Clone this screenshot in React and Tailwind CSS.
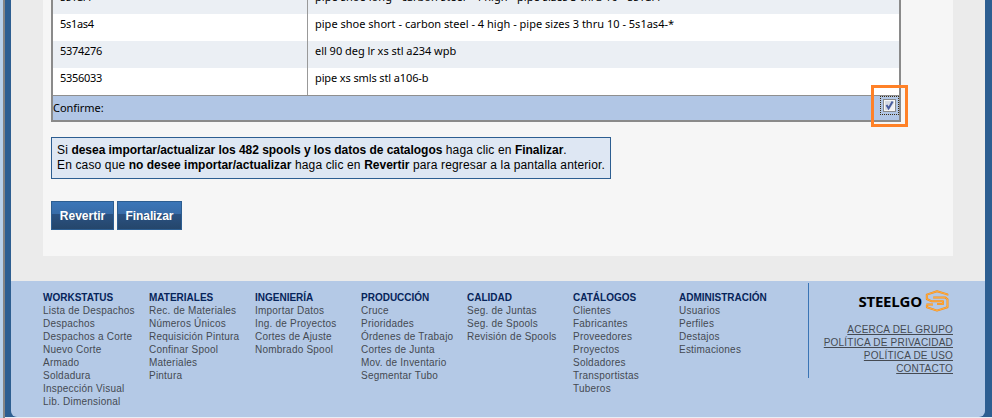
const rows = [
  { code: '5s1al4', text: 'pipe shoe long - carbon steel - 4 high - pipe sizes 3 thru 10 - 5s1al4-*', alt: true, spacing: 'tracking-[0.05px]' },
  { code: '5s1as4', text: 'pipe shoe short - carbon steel - 4 high - pipe sizes 3 thru 10 - 5s1as4-*', alt: false, spacing: 'tracking-[0.01px]' },
  { code: '5374276', text: 'ell 90 deg lr xs stl a234 wpb', alt: true, spacing: 'tracking-[-0.03px]' },
  { code: '5356033', text: 'pipe xs smls stl a106-b', alt: false, spacing: 'tracking-[-0.12px]' },
];

const columns = [
  { title: 'WORKSTATUS', items: ['Lista de Despachos', 'Despachos', 'Despachos a Corte', 'Nuevo Corte', 'Armado', 'Soldadura', 'Inspección Visual', 'Lib. Dimensional'] },
  { title: 'MATERIALES', items: ['Rec. de Materiales', 'Números Únicos', 'Requisición Pintura', 'Confinar Spool', 'Materiales', 'Pintura'] },
  { title: 'INGENIERÍA', items: ['Importar Datos', 'Ing. de Proyectos', 'Cortes de Ajuste', 'Nombrado Spool'] },
  { title: 'PRODUCCIÓN', items: ['Cruce', 'Prioridades', 'Órdenes de Trabajo', 'Cortes de Junta', 'Mov. de Inventario', 'Segmentar Tubo'] },
  { title: 'CALIDAD', items: ['Seg. de Juntas', 'Seg. de Spools', 'Revisión de Spools'] },
  { title: 'CATÁLOGOS', items: ['Clientes', 'Fabricantes', 'Proveedores', 'Proyectos', 'Soldadores', 'Transportistas', 'Tuberos'] },
  { title: 'ADMINISTRACIÓN', items: ['Usuarios', 'Perfiles', 'Destajos', 'Estimaciones'] },
];

const links = ['ACERCA DEL GRUPO', 'POLÍTICA DE PRIVACIDAD', 'POLÍTICA DE USO', 'CONTACTO'];

function CatalogTable() {
  return (
    <div className="relative flex h-[122px] w-[850px] flex-col border-x-2 border-b-2 border-[#8a8a8a] font-['Noto_Sans','Open_Sans',sans-serif] text-[11px] leading-[20px] text-black">
      <div className="flex h-[95px] flex-col justify-end overflow-hidden">
        {rows.map((r) => (
          <div key={r.code} className={r.alt ? 'flex h-[27px] shrink-0 bg-[#ebeff4]' : 'flex h-[27px] shrink-0 bg-white'}>
            <div className="w-[254px] pl-[7px] tracking-[-0.3px]">{r.code}</div>
            <div className="flex-1 whitespace-nowrap border-l border-[#999] pl-[7px]">
              <span className={r.spacing}>{r.text}</span>
            </div>
          </div>
        ))}
      </div>
      <div className="flex h-[25px] items-start justify-between border-t border-[#8f8f8f] bg-[#b1c6e5]">
        <span className="pt-[2px] tracking-[-0.05px]">Confirme:</span>
        <span className="flex size-[19px] items-center justify-center border border-dotted border-[#3c2c10]">
          <svg width="13" height="13" viewBox="0 0 13 13">
            <rect x="0.5" y="0.5" width="12" height="12" fill="#f6f6f6" stroke="#8a8b8c" />
            <rect x="2" y="2" width="9" height="9" fill="#d5dae3" />
            <path d="M6 11h5V4z" fill="#f0f1f4" />
            <path d="M3.5 6 5.6 9.4 9.6 2.6" fill="none" stroke="#485c9e" strokeWidth="2" />
          </svg>
        </span>
      </div>
      <div className="absolute left-[818px] top-[85px] h-[42px] w-[37px] border-[3px] border-[#ff8127]" />
    </div>
  );
}

const upperHook = 'M22.4 5.6V4.4L12 1.2 1.8 4.6V9l4.4 2.2H18V14h-6';
const lowerHook = 'M1.4 14.6H8M1.9 15v2.3L12 20.6l10.5-3.4V9.2L20.4 7.6H8.2';

function Logo() {
  return (
    <div className="flex h-[22px] items-center justify-end gap-[3px] pr-1">
      <span className="font-['Open_Sans','Noto_Sans',sans-serif] text-[15px] font-bold leading-[20px] tracking-[-0.2px] text-black">STEELGO</span>
      <svg width="24" height="22" viewBox="0 0 24 22" fill="none" strokeLinejoin="round">
        <path d={upperHook} stroke="#f58c1c" strokeWidth="2" />
        <path d={lowerHook} stroke="#f58c1c" strokeWidth="2" />
        <path d={upperHook} stroke="#ffb84a" strokeWidth="0.8" />
        <path d={lowerHook} stroke="#ffb84a" strokeWidth="0.8" />
      </svg>
    </div>
  );
}

export default function App() {
  return (
    <div className="flex h-[418px] w-[992px] overflow-hidden bg-[#e9eef5] font-['Liberation_Sans',Arial,sans-serif]">
      <div className="w-[3px] bg-[#b9d1ea]" />
      <div className="w-[2px] bg-[#858585]" />
      <div className="flex h-[417px] flex-1 bg-[#2d5e91] pl-[6px] pr-[7px]">
        <div className="flex w-[974px] flex-col overflow-hidden rounded-b-[6px] bg-[#b4c9e6]">
          <div className="h-[281px] bg-[#ebebeb] px-8">
            <div className="h-[256px] bg-[#f6f6f6] pl-2">
              <CatalogTable />
              <div className="mt-[15px] h-[42px] w-[560px] whitespace-nowrap border border-[#2d5e91] bg-[#dee7f3] px-[5px] pt-[5px] text-[12px] leading-[15px] tracking-[0.14px] text-black">
                <p>Si <b className="tracking-[-0.04px]">desea importar/actualizar los 482 spools y los datos de catalogos</b> haga clic en <b className="tracking-[-0.04px]">Finalizar</b>.</p>
                <p>En caso que <b className="tracking-normal">no desee importar/actualizar</b> haga clic en <b className="tracking-normal">Revertir</b> para regresar a la pantalla anterior.</p>
              </div>
              <div className="mt-[22px] flex gap-[3px] text-[12px] font-bold text-white">
                <button className="h-[29px] w-[63px] border border-[#2d5e91] bg-[linear-gradient(#3b76b8_0%,#386ca8_44%,#2a5181_46%,#25466b_100%)]">Revertir</button>
                <button className="h-[29px] w-[65px] border border-[#2d5e91] bg-[linear-gradient(#3b76b8_0%,#386ca8_44%,#2a5181_46%,#25466b_100%)] tracking-[-0.1px]">Finalizar</button>
              </div>
            </div>
          </div>
          <div className="flex pl-8 pr-8 pt-[2px]">
            <div className="flex w-[765px] pt-[8px] text-[10px] leading-[13px]">
              {columns.map((c) => (
                <div key={c.title} className="w-[106px] shrink-0 whitespace-nowrap text-[#454a52]">
                  <h3 className="text-[10px] font-bold text-[#06245a]">{c.title}</h3>
                  <div className="tracking-[0.22px]">
                    {c.items.map((i) => (
                      <div key={i}>{i}</div>
                    ))}
                  </div>
                </div>
              ))}
            </div>
            <div className="h-[95px] w-[145px] border-l border-[#3a74b5] pt-[7px] text-right text-[10px] leading-[13px] tracking-[0.2px] text-[#454a52]">
              <Logo />
              <div className="pt-[11px]">
                {links.map((l) => (
                  <div key={l} className="underline">{l}</div>
                ))}
              </div>
            </div>
          </div>
        </div>
      </div>
    </div>
  );
}
